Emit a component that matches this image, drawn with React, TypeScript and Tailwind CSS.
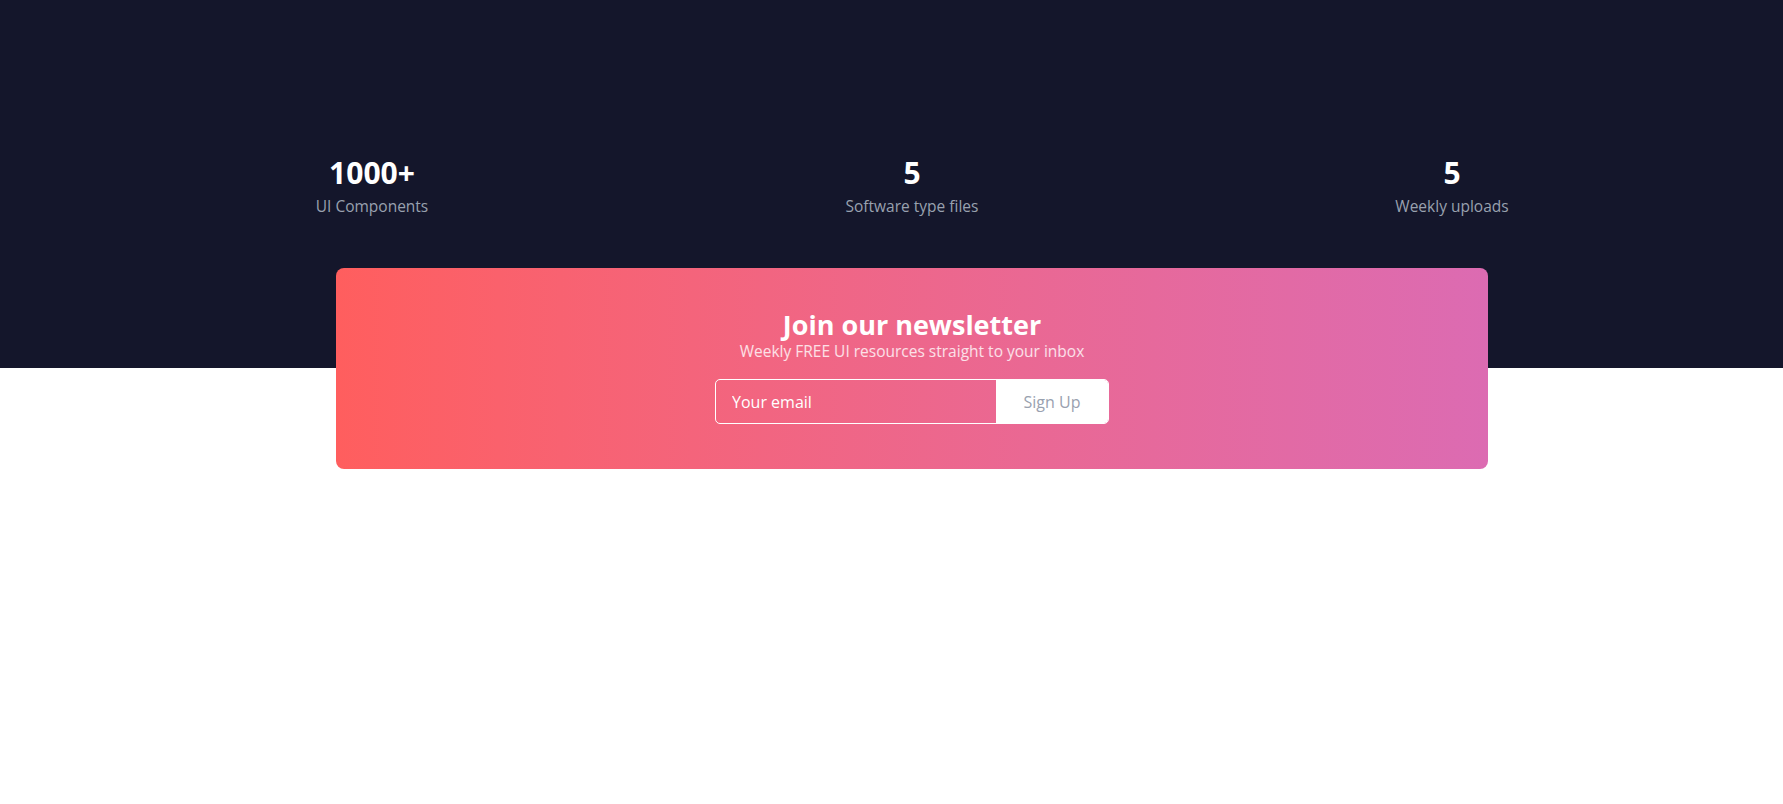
import { useState } from "react";

const stats = [
  { value: "1000+", label: "UI Components" },
  { value: "5", label: "Software type files" },
  { value: "5", label: "Weekly uploads" },
];

export default function App() {
  const [email, setEmail] = useState("");
  return (
    <div className="min-h-[804px] w-full overflow-hidden bg-white font-['Open_Sans',sans-serif]">
      {/* dark band with stats */}
      <div className="h-[368px] bg-[#14162b] pt-[155px]">
        <div className="ml-[102px] grid w-[1620px] grid-cols-3">
          {stats.map((s) => (
            <div key={s.label} className="flex flex-col items-center">
              <span className="text-[30px] font-bold leading-9 text-white">{s.value}</span>
              <span className="mt-[4px] text-[15.5px] text-gray-400">{s.label}</span>
            </div>
          ))}
        </div>
      </div>

      {/* newsletter card, overlapping the band */}
      <div className="-mt-[100px] ml-[336px] w-[1152px] rounded-lg bg-linear-to-r from-[#ff5e5e] to-[#dc6bb2] px-8 pt-[41px] pb-[45px]">
        <div className="flex flex-col items-center">
          <h2 className="text-[27px] font-bold leading-8 text-white">Join our newsletter</h2>
          <p className="text-[15.5px] leading-5 text-white/80">Weekly FREE UI resources straight to your inbox</p>
          <form
            className="mt-[18px] flex h-[45px] w-[394px] overflow-hidden rounded-[5px] border border-white"
            onSubmit={(e) => e.preventDefault()}
          >
            <input
              value={email}
              onChange={(e) => setEmail(e.target.value)}
              placeholder="Your email"
              className="min-w-0 flex-1 bg-transparent px-4 text-base text-white outline-none placeholder:text-white"
            />
            <button type="submit" className="w-[112px] bg-white text-base text-gray-400">
              Sign Up
            </button>
          </form>
        </div>
      </div>
    </div>
  );
}
